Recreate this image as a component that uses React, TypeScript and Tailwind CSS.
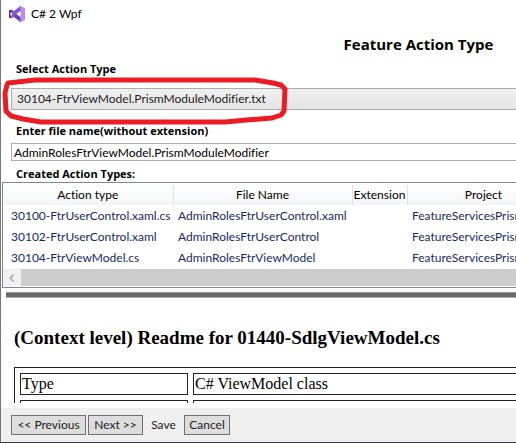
import type { ReactNode } from "react";

const actions = [
  { type: "30100-FtrUserControl.xaml.cs", file: "AdminRolesFtrUserControl.xaml", project: "FeatureServicesPrism" },
  { type: "30102-FtrUserControl.xaml", file: "AdminRolesFtrUserControl", project: "FeatureServicesPrism" },
  { type: "30104-FtrViewModel.cs", file: "AdminRolesFtrViewModel", project: "FeatureServicesPrism" },
];

function Logo() {
  return (
    <svg className="size-4" viewBox="0 0 16 16" aria-hidden="true">
      <path d="M0 4.6 2.4 3.4 12 10.8v5.2h-.7L2.4 9z" fill="#6a3fb0" />
      <path d="M0 11.4 2.4 12.6 12 5.2V0h-.7L2.4 7z" fill="#8a55cc" />
      <path d="M0 4.6 1.4 4v8L0 11.4z" fill="#52218a" />
      <path d="M11.3 0 16 2v12l-4.7 2z" fill="#b98af5" />
      <path d="M1.6 6v4l2-2zM7.4 8l3.9-3v6z" fill="#fff" />
    </svg>
  );
}

function Head({ children }: { children?: ReactNode }) {
  return (
    <th className="border-r border-[#dfe3e6] bg-linear-to-b from-white to-[#f3f5f6] p-0 text-center font-normal text-black">
      {children}
    </th>
  );
}

const button = "h-5 border border-[#707070] bg-[#dddddd] text-center";
const label = "pl-[5px] font-['Open_Sans','Noto_Sans',sans-serif] text-[11px] font-bold leading-4";

export default function App() {
  return (
    <div className="relative flex flex-col overflow-hidden border-b border-l border-b-[#33384d] border-l-[#777777] bg-white font-['Lato','Open_Sans',sans-serif] text-xs leading-4 text-black [font-variant-ligatures:none]">
      <header className="flex h-7 items-center gap-1.5 pl-2">
        <Logo />
        <span>C# 2 Wpf</span>
      </header>

      <main className="min-w-[835px]">
        <h1 className="pt-1.5 text-center font-['Open_Sans','Noto_Sans',sans-serif] text-[15px] leading-5 font-bold">Feature Action Type</h1>
        <div className="flex flex-col pt-[7px] pl-2.5">
          <label htmlFor="action" className={`${label} pb-[11px]`}>Select Action Type</label>
          <select
            id="action"
            className="h-[22px] appearance-none border border-[#acacac] bg-linear-to-b from-[#f0f0f0] to-[#e5e5e5] pl-[5px] text-xs text-[#222222]"
          >
            <option>30104-FtrViewModel.PrismModuleModifier.txt</option>
          </select>
          <label htmlFor="filename" className={`${label} pt-[13px] pb-1`}>Enter file name(without extension)</label>
          <input
            id="filename"
            defaultValue="AdminRolesFtrViewModel.PrismModuleModifier"
            className="h-[18px] border border-[#abadb3] px-0.5 text-xs"
          />
          <h2 className={`${label} pt-[5px]`}>Created Action Types:</h2>
        </div>

        <section className="ml-px border border-[#828790] pt-0.5 pb-px">
          <table className="mb-px w-[780px] table-fixed border-collapse text-[#152968]">
            <colgroup>
              <col className="w-[170px]" />
              <col className="w-[179px]" />
              <col className="w-[55px]" />
              <col className="w-[153px]" />
              <col />
            </colgroup>
            <thead>
              <tr className="h-5">
                <Head>Action type</Head>
                <Head>File Name</Head>
                <Head>Extension</Head>
                <Head>Project</Head>
                <Head />
              </tr>
            </thead>
            <tbody className="whitespace-nowrap">
              {actions.map((a) => (
                <tr key={a.type} className="h-[21px]">
                  <td className="p-0 pl-2">{a.type}</td>
                  <td className="p-0 pl-[5px]">{a.file}</td>
                  <td className="p-0" />
                  <td className="p-0 pl-[5px]">{a.project}</td>
                  <td className="p-0" />
                </tr>
              ))}
            </tbody>
          </table>
          <div className="flex h-[17px] bg-[#cdcdcd]">
            <button type="button" aria-label="Scroll left" className="flex w-[18px] items-center justify-center bg-[#f0f0f0]">
              <svg width="6" height="8" viewBox="0 0 6 8" fill="none" stroke="#a3a3a3" strokeWidth="1.5">
                <path d="M4.5.8 1.3 4l3.2 3.2" />
              </svg>
            </button>
          </div>
        </section>

        <div className="mt-1 ml-[5px] h-1.5 border-y border-[#999999] border-b-[#b0b0b0] bg-[#696969]" />

        <article className="h-[105px] overflow-hidden pl-[13px] font-['Liberation_Serif',serif] text-base">
          <h2 className="pt-7 text-[19px] leading-6 font-bold">(Context level) Readme for 01440-SdlgViewModel.cs</h2>
          <table className="mt-[17px] w-full table-fixed border-separate border-spacing-[5px] border border-[#222222] leading-5">
            <colgroup>
              <col className="w-[168px]" />
              <col />
            </colgroup>
            <tbody>
              <tr>
                <td className="border border-[#222222] px-px py-0">Type</td>
                <td className="border border-[#222222] px-px py-0">C# ViewModel class</td>
              </tr>
              <tr>
                <td className="h-6 border border-[#222222]" />
                <td className="h-6 border border-[#222222]" />
              </tr>
            </tbody>
          </table>
        </article>
      </main>

      <footer className="mt-[5px] flex h-[34px] items-center gap-0.5 bg-[#efefef] pl-2.5 text-[#222222]">
        <button type="button" className={`${button} w-[75px]`}>{"<< Previous"}</button>
        <button type="button" className={`${button} w-[55px]`}>{"Next >>"}</button>
        <button type="button" className="h-5 w-[37px] text-center">Save</button>
        <button type="button" className={`${button} w-[46px]`}>Cancel</button>
      </footer>

      <svg className="pointer-events-none absolute top-[74px] left-0 h-[54px] w-[290px]" viewBox="0 0 290 54" fill="none" stroke="#ed1c24" strokeWidth="5" strokeLinejoin="round" strokeLinecap="round" aria-hidden="true">
        <path d="M7 9 16 8l18-2h220l18 3 8 2 4 4-1 22-3 4-9 3-26 2-21 2H40l-18-3-12-3-5-5-1-18 2-8z" />
      </svg>
    </div>
  );
}
